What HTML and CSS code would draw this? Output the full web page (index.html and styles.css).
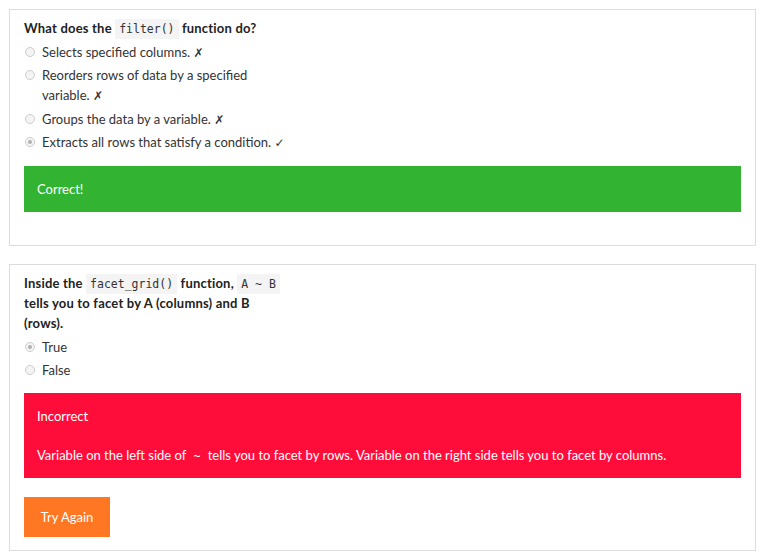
FILE: index.html
```html
<!DOCTYPE html>
<html>
<head>
<meta charset="utf-8">
<link rel="stylesheet" href="styles.css">
</head>
<body>
<div class="page">
  <div class="card">
    <div class="question">
      <div class="q-title">What does the <code>filter()</code> function do?</div>
      <div class="options">
        <div class="option"><span class="radio"></span><span class="label">Selects specified columns. <span class="mark">✗</span></span></div>
        <div class="option"><span class="radio"></span><span class="label">Reorders rows of data by a specified variable. <span class="mark">✗</span></span></div>
        <div class="option"><span class="radio"></span><span class="label">Groups the data by a variable. <span class="mark">✗</span></span></div>
        <div class="option"><span class="radio checked"></span><span class="label">Extracts all rows that satisfy a condition. <span class="mark">✓</span></span></div>
      </div>
    </div>
    <div class="alert alert-success">Correct!</div>
    <div class="spacer"></div>
  </div>

  <div class="card">
    <div class="question">
      <div class="q-title">Inside the <code>facet_grid()</code> function, <code>A ~ B</code> tells you to facet by A (columns) and B (rows).</div>
      <div class="options">
        <div class="option"><span class="radio checked"></span><span class="label">True</span></div>
        <div class="option"><span class="radio"></span><span class="label">False</span></div>
      </div>
    </div>
    <div class="alert alert-danger">
      <div class="alert-head">Incorrect</div>
      <div>Variable on the left side of <code class="plain">~</code> tells you to facet by rows. Variable on the right side tells you to facet by columns.</div>
    </div>
    <button class="btn-retry">Try Again</button>
  </div>
</div>
</body>
</html>
```

FILE: styles.css
```css
html, body {
  margin: 0;
  padding: 0;
  background: #ffffff;
}

body {
  font-family: Lato, "Open Sans", "Liberation Sans", sans-serif;
  font-size: 13px;
  line-height: 20px;
  color: #333333;
}

.page {
  padding: 9px 7px 0 9px;
  display: flex;
  flex-direction: column;
  gap: 18px;
}

.card {
  border: 1px solid #dddddd;
  padding: 8px 14px 13px 14px;
}

.question {
  width: 262px;
}

.q-title {
  font-weight: bold;
  color: #222222;
  letter-spacing: 0.2px;
}

code {
  font-family: "DejaVu Sans Mono", "Liberation Mono", monospace;
  font-size: 11.5px;
  line-height: 10px;
  background: #f4f4f4;
  padding: 3px 4px;
  color: #333333;
  font-weight: normal;
  letter-spacing: 0;
}

.options {
  margin-top: 4px;
  display: flex;
  flex-direction: column;
  gap: 3.3px;
}

.option {
  display: flex;
  align-items: flex-start;
}

.radio {
  flex: none;
  width: 10px;
  height: 10px;
  border: 1px solid #cccccc;
  border-radius: 50%;
  background: #f4f4f4;
  margin: 5px 7px 0 1px;
  box-sizing: border-box;
  position: relative;
}

.radio.checked::after {
  content: "";
  position: absolute;
  left: 2px;
  top: 2px;
  width: 4px;
  height: 4px;
  border-radius: 50%;
  background: #b0b0b0;
}

.mark {
  font-family: "DejaVu Sans", sans-serif;
  font-size: 12px;
  line-height: 10px;
}

.alert {
  color: #ffffff;
  padding: 13px;
  margin-top: 14px;
}

.alert-success {
  background: #32b432;
}

.alert-danger {
  background: #ff0d3a;
  margin-top: 13px;
}

.alert-head {
  margin-bottom: 19px;
}

code.plain {
  background: transparent;
  color: #ffffff;
  padding: 0 4px;
}

.spacer {
  height: 20px;
}

.btn-retry {
  display: block;
  margin-top: 19px;
  width: 86px;
  height: 40px;
  border: none;
  background: #ff7722;
  color: #ffffff;
  font-family: inherit;
  font-size: 13px;
  padding: 0;
}
```
